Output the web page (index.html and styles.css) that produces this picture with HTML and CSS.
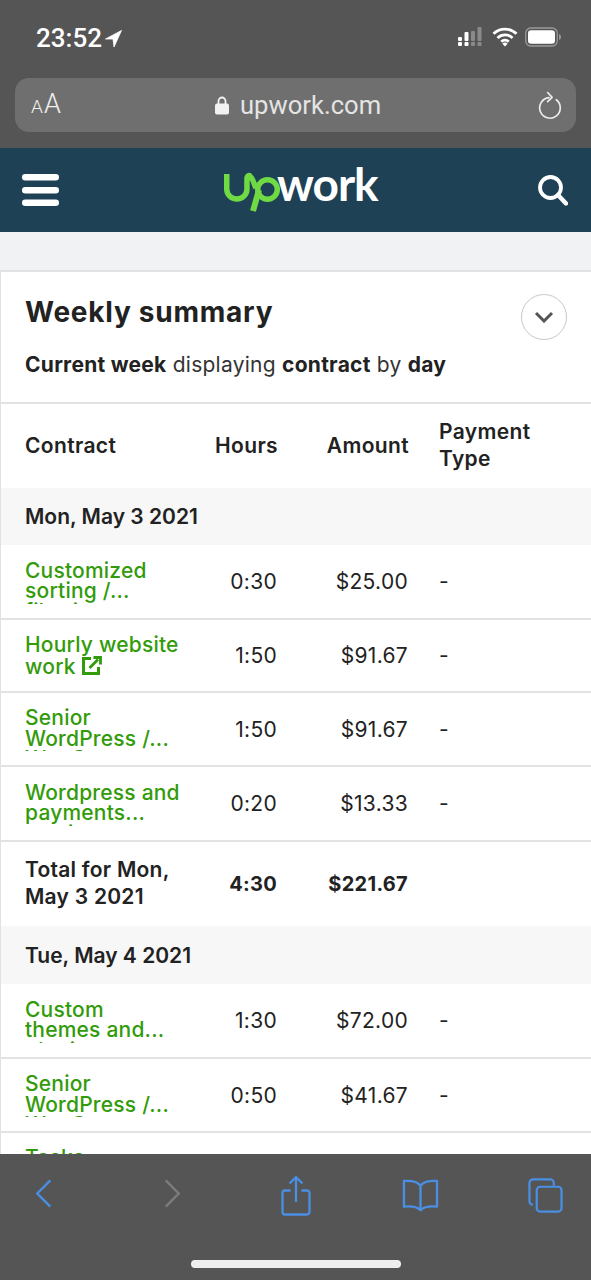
FILE: index.html
```html
<!DOCTYPE html>
<html lang="en">
<head>
<meta charset="utf-8">
<title>Weekly summary</title>
<link rel="stylesheet" href="styles.css">
</head>
<body>
<div class="phone">
  <div class="browser-top">
    <div class="status">
      <div class="clock"><span>23:52</span>
        <svg class="loc" viewBox="0 0 17 17"><path d="M16.500 .5 .5 9h7.500l1 8z" fill="#fff" stroke="#fff" stroke-width=".8" stroke-linejoin="round"/></svg>
      </div>
      <div class="status-icons">
        <svg class="signal" viewBox="0 0 26 20"><g fill="#fff"><rect x="0" y="10" width="4" height="4" rx="1"/><rect x="0" y="15" width="4" height="4" rx="1"/><rect x="6.500" y="5" width="4" height="9" rx="1"/><rect x="6.500" y="15" width="4" height="4" rx="1"/></g><g fill="#8a8a8a"><rect x="13" y="4" width="4" height="10" rx="1"/><rect x="13" y="15" width="4" height="4" rx="1"/><rect x="19.500" y="0" width="4" height="14" rx="1"/><rect x="19.500" y="15" width="4" height="4" rx="1"/></g></svg>
        <svg class="wifi" viewBox="0 0 26 20"><path d="M1.500 6.800a16.500 16.500 0 0 1 23 0M5.500 10.900a10.800 10.800 0 0 1 15 0M9.300 14.700a5.400 5.400 0 0 1 7.400 0" fill="none" stroke="#fff" stroke-width="2.800"/><path d="M13 19.500l-2.600-2.800a3.700 3.700 0 0 1 5.200 0z" fill="#fff"/></svg>
        <svg class="battery" viewBox="0 0 37 20"><rect x=".75" y="1" width="31.500" height="18" rx="5" fill="none" stroke="#999" stroke-width="1.300"/><rect x="3" y="3.200" width="27" height="13.600" rx="3" fill="#fff"/><path d="M34 7v6c1.500-.5 2-1.700 2-3s-.5-2.500-2-3z" fill="#999"/></svg>
      </div>
    </div>
    <div class="urlbar">
      <span class="aa"><small>A</small>A</span>
      <span class="domain">
        <svg class="lock" viewBox="0 0 14 19"><path d="M3.500 8V5a3.500 3.500 0 0 1 7 0v3" fill="none" stroke="#f2f2f2" stroke-width="1.800"/><rect x="0" y="7.500" width="14" height="11" rx="2" fill="#f2f2f2"/></svg>
        upwork.com
      </span>
      <svg class="reload" viewBox="0 0 26 30"><path d="M19 9a10.700 10.700 0 1 1-7.500-2.200" fill="none" stroke="#ededed" stroke-width="1.700" stroke-linecap="round"/><path d="M10 1.500l4.700 5-4.700 4.500" fill="none" stroke="#ededed" stroke-width="1.700" stroke-linecap="round" stroke-linejoin="round"/></svg>
    </div>
  </div>

  <header class="site-header">
    <svg class="burger" viewBox="0 0 37 32"><g fill="#fff"><rect width="37" height="6.500" rx="3.200"/><rect y="13" width="37" height="6.500" rx="3.200"/><rect y="25.500" width="37" height="6.500" rx="3.200"/></g></svg>
    <div class="logo">
      <svg class="logo-up" viewBox="0 0 58 46"><path d="M3.750 4V19a10.100 10.100 0 0 0 20.200 0V8c.5-2 2-3 3-2 3 2.500 4 8 6 12" fill="none" stroke="#6fda44" stroke-width="5.500"/><circle cx="44.500" cy="19.500" r="9.800" fill="none" stroke="#6fda44" stroke-width="5.500"/><path d="M36 20 30 41" fill="none" stroke="#6fda44" stroke-width="6"/></svg>
      <span class="logo-word">work</span>
    </div>
    <svg class="search" viewBox="0 0 30 31"><circle cx="12.500" cy="12.500" r="10.500" fill="none" stroke="#fff" stroke-width="3.800"/><path d="M20 20l8 8.500" fill="none" stroke="#fff" stroke-width="4.400" stroke-linecap="round"/></svg>
  </header>

  <main class="content">
    <section class="card">
      <div class="card-head">
        <div class="title-row">
          <h1>Weekly summary</h1>
          <button class="toggle" type="button" aria-label="Toggle">
            <svg viewBox="0 0 20 12"><path d="M2 2l8 8 8-8" fill="none" stroke="#555" stroke-width="3"/></svg>
          </button>
        </div>
        <p class="subtitle"><b>Current week</b> displaying <b>contract</b> by <b>day</b></p>
      </div>
      <table class="summary">
        <colgroup><col class="c-contract"><col class="c-hours"><col class="c-amount"><col class="c-type"></colgroup>
        <thead>
          <tr><th>Contract</th><th class="num">Hours</th><th class="num">Amount</th><th class="type">Payment Type</th></tr>
        </thead>
        <tbody>
          <tr class="day first"><td colspan="4">Mon, May 3 2021</td></tr>
          <tr class="row"><td><a class="clamp">Customized<br>sorting /...<br>filtering</a></td><td class="num">0:30</td><td class="num">$25.00</td><td class="type">-</td></tr>
          <tr class="row short"><td><a class="clamp">Hourly website<br>work<svg class="ext" viewBox="0 0 20 19"><path d="M9 2.500H1.500v15h15V11" fill="none" stroke="#329b0a" stroke-width="3"/><path d="M7.500 12 16 3.500M11.500 1.500h7v7" fill="none" stroke="#329b0a" stroke-width="2.800"/></svg></a></td><td class="num">1:50</td><td class="num">$91.67</td><td class="type">-</td></tr>
          <tr class="row"><td><a class="clamp">Senior<br>WordPress /...<br>WooCommerce</a></td><td class="num">1:50</td><td class="num">$91.67</td><td class="type">-</td></tr>
          <tr class="row tall"><td><a class="clamp">Wordpress and<br>payments...<br>on site</a></td><td class="num">0:20</td><td class="num">$13.33</td><td class="type">-</td></tr>
          <tr class="total"><td>Total for Mon, May 3 2021</td><td class="num">4:30</td><td class="num">$221.67</td><td></td></tr>
          <tr class="day"><td colspan="4">Tue, May 4 2021</td></tr>
          <tr class="row"><td><a class="clamp">Custom<br>themes and...<br>plugins</a></td><td class="num">1:30</td><td class="num">$72.00</td><td class="type">-</td></tr>
          <tr class="row"><td><a class="clamp">Senior<br>WordPress /...<br>WooCommerce</a></td><td class="num">0:50</td><td class="num">$41.67</td><td class="type">-</td></tr>
          <tr class="row"><td><a class="clamp">Tasks<br>and<br>fixes</a></td><td class="num"></td><td class="num"></td><td class="type"></td></tr>
        </tbody>
      </table>
    </section>
  </main>

  <nav class="toolbar">
    <svg class="tb back" viewBox="0 0 20 34"><path d="M17 2.500 2.500 17 17 31.500" fill="none" stroke="#4a8fe3" stroke-width="2.600"/></svg>
    <svg class="tb fwd" viewBox="0 0 20 34"><path d="M3 2.500 17.500 17 3 31.500" fill="none" stroke="#7c7c7c" stroke-width="2.600"/></svg>
    <svg class="tb share" viewBox="0 0 30 42"><path d="M9.500 15.500H4a2.500 2.500 0 0 0-2.500 2.500v19A2.500 2.500 0 0 0 4 39.500h22a2.500 2.500 0 0 0 2.500-2.500V18a2.500 2.500 0 0 0-2.500-2.500h-5.500M15 27V2.500M8.500 8.500 15 2.200l6.500 6.300" fill="none" stroke="#4a8fe3" stroke-width="2.300"/></svg>
    <svg class="tb book" viewBox="0 0 38 34"><path d="M19 7.500C16 3 11 2 2 2.500v26.500c7.500-.8 13.500.2 17 3.500 3.500-3.300 9.500-4.300 17-3.500V2.500C27 2 22 3 19 7.500zM19 7.500v25" fill="none" stroke="#4a8fe3" stroke-width="2.400" stroke-linejoin="round"/></svg>
    <svg class="tb tabs" viewBox="0 0 36 36"><path d="M5 27.500A3.500 3.500 0 0 1 1.500 24V5A3.500 3.500 0 0 1 5 1.500h18A3.500 3.500 0 0 1 26.500 5v3" fill="none" stroke="#4a8fe3" stroke-width="2.300"/><rect x="9" y="9" width="25.500" height="25.500" rx="3.500" fill="none" stroke="#4a8fe3" stroke-width="2.300"/></svg>
    <span class="home-bar"></span>
  </nav>
</div>
</body>
</html>
```
FILE: styles.css
```css
* { box-sizing: border-box; }
html, body { margin: 0; padding: 0; }
body { font-family: Inter, "Open Sans", sans-serif; color: #1f1f1f; background: #f1f2f4; }
.phone { position: relative; width: 591px; height: 1280px; overflow: hidden; display: flex; flex-direction: column; background: #f1f2f4; }

.browser-top { background: #555; height: 148px; flex: none; padding: 0 15px; display: flex; flex-direction: column; }
.status { height: 78px; display: flex; justify-content: space-between; align-items: flex-start; padding: 24px 14px 0 21px; }
.clock { display: flex; align-items: center; gap: 3px; color: #fff; font-family: Roboto, sans-serif; font-weight: 500; font-size: 26px; line-height: 28px; }
.loc { width: 17px; height: 17px; }
.status-icons { display: flex; align-items: center; gap: 7px; padding-top: 3px; }
.signal { width: 28px; height: 20px; }
.wifi { width: 26px; height: 20px; }
.battery { width: 37px; height: 20px; }

.urlbar { position: relative; height: 54px; border-radius: 14px; background: #6f6f6f; display: flex; align-items: center; justify-content: space-between; padding: 0 13px 0 16px; color: #eee; }
.aa { font-family: Roboto, sans-serif; font-size: 27px; font-weight: 300; line-height: 28px; color: #f0f0f0; }
.aa small { font-size: 19px; margin-right: 1px; }
.domain { position: absolute; left: 200px; top: 11px; display: flex; align-items: center; gap: 11px; font-family: Roboto, sans-serif; font-size: 25.600px; line-height: 32px; color: #e4e4e4; }
.lock { width: 14px; height: 19px; }
.reload { width: 25px; height: 29px; }

.site-header { height: 84px; flex: none; background: #1e4155; display: flex; align-items: center; justify-content: space-between; padding: 0 23px 0 22px; position: relative; }
.burger { width: 37px; height: 32px; }
.logo { position: absolute; left: 223px; top: 13px; display: flex; align-items: flex-start; }
.logo-up { width: 58px; height: 46px; margin-top: 9px; flex: none; }
.logo-word { font-family: Lato, sans-serif; font-weight: 700; font-size: 46px; line-height: 46px; color: #fff; margin-left: -4px; letter-spacing: -1px; }
.search { width: 30px; height: 31px; }

.content { flex: none; padding-top: 38px; }
.card { background: #fff; border-top: 2px solid #e2e2e2; border-left: 1px solid #e2e2e2; }
.card-head { height: 132px; padding: 22px 24px 0 24px; border-bottom: 2px solid #e2e2e2; }
.title-row { display: flex; justify-content: space-between; align-items: flex-start; }
h1 { margin: 0; font-size: 28px; line-height: 36px; font-weight: 700; color: #222; letter-spacing: .75px; }
.toggle { width: 46px; height: 46px; margin: 0; padding: 0; border-radius: 50%; border: 1px solid #c8c8c8; background: #fff; display: flex; align-items: center; justify-content: center; }
.toggle svg { width: 20px; height: 12px; }
.subtitle { margin: 12px 0 0; font-size: 21px; line-height: 26px; color: #333; letter-spacing: .26px; }
.subtitle b { color: #222; font-weight: 700; }

.summary { width: 590px; border-collapse: collapse; table-layout: fixed; font-size: 21px; letter-spacing: .3px; }
.c-contract { width: 197px; }
.c-hours { width: 80px; }
.c-amount { width: 131px; }
.c-type { width: 182px; }
th { height: 84px; text-align: left; font-weight: 600; font-size: 21px; line-height: 27px; padding: 0 0 2px; color: #222; letter-spacing: .35px; }
th:first-child, td:first-child { padding-left: 24px; }
.num { text-align: right; }
th.type, td.type { padding-left: 30px; }
th.type { padding-right: 40px; }
.day td { height: 58px; background: #f7f7f7; font-weight: 600; color: #222; letter-spacing: 0; }
.day.first td { height: 57px; }
.row td { height: 74px; border-bottom: 2px solid #e2e2e2; color: #222; }
.row.short td { height: 73px; }
.row.tall td { height: 75px; }
.clamp { display: block; max-height: 44px; padding-top: 1px; overflow: hidden; color: #329b0a; font-size: 21px; font-weight: 500; letter-spacing: .2px; line-height: 20.500px; white-space: nowrap; }
.ext { width: 20px; height: 19px; margin-left: 6px; vertical-align: -1px; }
.total td { height: 85px; font-size: 20px; font-weight: 700; line-height: 27px; color: #222; }
.total td:first-child { font-size: 21px; font-weight: 600; letter-spacing: .25px; padding: 0 10px 2px 24px; }

.toolbar { position: absolute; left: 0; right: 0; bottom: 0; height: 126px; background: #555; }
.tb { position: absolute; }
.back { left: 35px; top: 23px; width: 18px; height: 33px; }
.fwd { left: 163px; top: 23px; width: 18px; height: 33px; }
.share { left: 281px; top: 21px; width: 30px; height: 42px; }
.book { left: 402px; top: 24px; width: 37px; height: 34px; }
.tabs { left: 528px; top: 24px; width: 35px; height: 35px; }
.home-bar { position: absolute; left: 191px; top: 106px; width: 210px; height: 8px; border-radius: 4px; background: #eee; }
```
